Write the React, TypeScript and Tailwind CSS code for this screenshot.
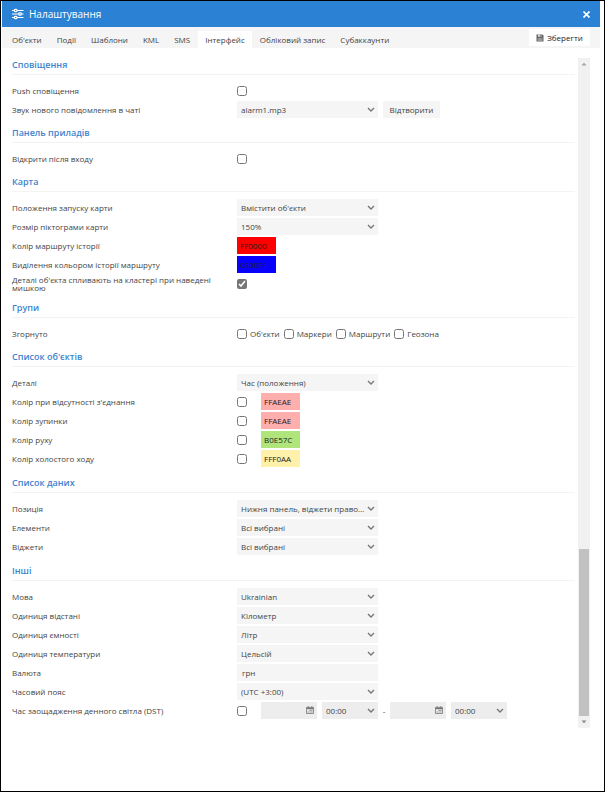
import React, { useId } from 'react';
import { clsx } from 'clsx';

const tabs = ["Об'єкти", 'Події', 'Шаблони', 'KML', 'SMS', 'Інтерфейс', 'Обліковий запис', 'Субаккаунти'];

function SlidersIcon() {
  return (
    <svg width="12" height="12" viewBox="0 0 12 12" fill="none" stroke="white" strokeWidth="1.2">
      <path d="M0 2.5h2.5M5.1 2.5H11.5M0 6h6.5M9.5 6h2M0 9.5h2.5M5.1 9.5h6.4" />
      <rect x="2.5" y="1.3" width="2.4" height="2.4" rx="0.8" />
      <rect x="6.8" y="4.8" width="2.4" height="2.4" rx="0.8" />
      <rect x="2.5" y="8.3" width="2.4" height="2.4" rx="0.8" />
    </svg>
  );
}

function SaveIcon() {
  return (
    <svg width="8" height="8" viewBox="0 0 8 8">
      <path d="M0.5 0.5h6L7.5 1.5v6h-7z" fill="#666" />
      <path d="M2 0.5h3.4v2.2H2z" fill="#ddd" />
      <path d="M4.2 0.8h0.8v1.5h-0.8z" fill="#555" />
      <path d="M1.6 4h4.8v3H1.6z" fill="#999" />
    </svg>
  );
}

function CalendarIcon() {
  return (
    <svg width="8" height="8" viewBox="0 0 8 8" fill="none" stroke="#777" strokeWidth="0.8">
      <path d="M0.5 1.4h7v6.1h-7z" />
      <path d="M0.5 2.4h7" strokeWidth="1.6" />
      <path d="M2.2 0v1.6M5.8 0v1.6" />
      <path d="M3.6 4.4h1M5.4 4.4h1M1.6 6h1M3.6 6h1M5.4 6h1" strokeWidth="1.2" />
    </svg>
  );
}

function Select({ id, value, className, label }: { id?: string; value: string; className?: string; label?: string }) {
  return (
    <span className={clsx('relative block h-[17px]', className || 'w-[141px] bg-[#f5f5f5]')}>
      <select
        id={id}
        aria-label={label}
        className="block h-full w-full appearance-none truncate bg-transparent pl-1 pr-3 text-[8px] outline-none"
      >
        <option>{value}</option>
      </select>
      <svg
        className="pointer-events-none absolute right-[3px] top-[6px]"
        width="8"
        height="6"
        viewBox="0 0 8 6"
        fill="none"
        stroke="#777"
        strokeWidth="1.4"
      >
        <path d="M1 1l3 3 3-3" />
      </svg>
    </span>
  );
}

function Check({ id, checked, label }: { id?: string; checked?: boolean; label?: string }) {
  return (
    <input
      id={id}
      type="checkbox"
      aria-label={label}
      defaultChecked={checked}
      className="block h-[10px] w-[10px] shrink-0 accent-[#767676]"
    />
  );
}

function ColorInput({ id, value, label }: { id?: string; value: string; label?: string }) {
  return (
    <input
      id={id}
      aria-label={label}
      defaultValue={value}
      className="block h-[17px] w-[39px] pl-[3px] text-[8px] text-[#222] outline-none"
      style={{ backgroundColor: '#' + value }}
    />
  );
}

function DateInput({ label }: { label: string }) {
  return (
    <span className="relative block">
      <input aria-label={label} className="block h-[17px] w-14 bg-[#ededed] pl-1 text-[8px] outline-none" />
      <span className="pointer-events-none absolute right-[3px] top-1">
        <CalendarIcon />
      </span>
    </span>
  );
}

function Section({ title, children }: { title: string; children: React.ReactNode }) {
  // longer lists get slightly more room below
  const long = React.Children.count(children) > 2;
  return (
    <section className={long ? 'pb-1.5' : 'pb-[5px]'}>
      <h2 className="mb-1.5 h-[19px] border-b border-[#f3f3f3] text-[9px] leading-[18px] font-semibold text-[#3d83cf]">
        {title}
      </h2>
      {children}
    </section>
  );
}

function Row({ label, children }: { label: string; children: (id: string) => React.ReactNode }) {
  const id = useId();
  return (
    <div className="flex h-[19px] items-center">
      <label htmlFor={id} className="w-[225px] shrink-0 pr-4 leading-[8px]">
        {label}
      </label>
      {children(id)}
    </div>
  );
}

function SelectRow({ label, value }: { label: string; value: string }) {
  return <Row label={label}>{(id) => <Select id={id} value={value} />}</Row>;
}

function ColorRow({ label, value }: { label: string; value: string }) {
  return (
    <Row label={label}>
      {(id) => (
        <div className="flex items-center gap-[14px]">
          <Check id={id} />
          <ColorInput value={value} label={label} />
        </div>
      )}
    </Row>
  );
}

export default function App() {
  return (
    <div className="flex min-h-screen flex-col border border-black bg-white pl-px pr-1 font-['Open_Sans',sans-serif] text-[8px] text-[#444]">
      {/* Title bar */}
      <header className="flex h-[26px] items-center bg-[#2b82d4] pl-[10px] pr-[10px] text-white">
        <SlidersIcon />
        <h1 className="ml-[5px] flex-1 text-[10px]">Налаштування</h1>
        <button aria-label="Закрити">
          <svg width="7" height="7" viewBox="0 0 7 7" stroke="white" strokeWidth="1.6">
            <path d="M0.5 0.5l6 6M6.5 0.5l-6 6" />
          </svg>
        </button>
      </header>

      {/* Tabs */}
      <nav className="flex h-[21px] bg-[#f5f5f5] pl-[3px] pr-[10px]">
        <div className="flex flex-1 items-end gap-px">
          {tabs.map((tab) => (
            <button
              key={tab}
              className={clsx('h-[17px] px-[7px] leading-[15px] whitespace-nowrap', tab === 'Інтерфейс' && 'bg-white')}
            >
              {tab}
            </button>
          ))}
        </div>
        <button className="mt-[2px] flex h-[17px] w-[61px] items-center justify-center gap-[3px] bg-white text-[#222]">
          <SaveIcon />
          Зберегти
        </button>
      </nav>

      {/* Settings */}
      <main className="flex pl-[10px] pr-[10px] pt-2">
        <div className="min-w-0 flex-1 pb-[2px]">
          <Section title="Сповіщення">
            <Row label="Push сповіщення">{(id) => <Check id={id} />}</Row>
            <Row label="Звук нового повідомлення в чаті">
              {(id) => (
                <>
                  <Select id={id} value="alarm1.mp3" />
                  <button className="ml-[5px] h-[17px] w-[57px] bg-[#f5f5f5]">Відтворити</button>
                </>
              )}
            </Row>
          </Section>

          <Section title="Панель приладів">
            <Row label="Відкрити після входу">{(id) => <Check id={id} />}</Row>
          </Section>

          <Section title="Карта">
            <SelectRow label="Положення запуску карти" value="Вмістити об'єкти" />
            <SelectRow label="Розмір піктограми карти" value="150%" />
            <Row label="Колір маршруту історії">{(id) => <ColorInput id={id} value="FF0000" />}</Row>
            <Row label="Виділення кольором історії маршруту">{(id) => <ColorInput id={id} value="0800FF" />}</Row>
            <Row label="Деталі об'єкта спливають на кластері при наведені мишкою">
              {(id) => <Check id={id} checked />}
            </Row>
          </Section>

          <Section title="Групи">
            <div className="flex h-[19px] items-center" role="group" aria-label="Згорнуто">
              <span className="w-[225px] shrink-0">Згорнуто</span>
              <div className="flex gap-1">
                {["Об'єкти", 'Маркери', 'Маршрути', 'Геозона'].map((name) => (
                  <label key={name} className="flex items-center gap-[3px]">
                    <Check />
                    {name}
                  </label>
                ))}
              </div>
            </div>
          </Section>

          <Section title="Список об'єктів">
            <SelectRow label="Деталі" value="Час (положення)" />
            <ColorRow label="Колір при відсутності з'єднання" value="FFAEAE" />
            <ColorRow label="Колір зупинки" value="FFAEAE" />
            <ColorRow label="Колір руху" value="B0E57C" />
            <ColorRow label="Колір холостого ходу" value="FFF0AA" />
          </Section>

          <Section title="Список даних">
            <SelectRow label="Позиція" value="Нижня панель, віджети праворуч" />
            <SelectRow label="Елементи" value="Всі вибрані" />
            <SelectRow label="Віджети" value="Всі вибрані" />
          </Section>

          <Section title="Інші">
            <SelectRow label="Мова" value="Ukrainian" />
            <SelectRow label="Одиниця відстані" value="Кілометр" />
            <SelectRow label="Одиниця ємності" value="Літр" />
            <SelectRow label="Одиниця температури" value="Цельсій" />
            <Row label="Валюта">
              {(id) => (
                <input id={id} defaultValue="грн" className="h-[17px] w-[141px] bg-[#f5f5f5] pl-[5px] text-[8px] outline-none" />
              )}
            </Row>
            <SelectRow label="Часовий пояс" value="(UTC +3:00)" />
            <Row label="Час заощадження денного світла (DST)">
              {(id) => (
                <div className="flex items-center">
                  <div className="mr-[14px]">
                    <Check id={id} />
                  </div>
                  <div className="flex gap-[5px]">
                    <DateInput label="Початок" />
                    <Select label="Час початку" value="00:00" className="w-14 bg-[#ededed]" />
                  </div>
                  <span className="w-3 text-center">-</span>
                  <div className="flex gap-[5px]">
                    <DateInput label="Кінець" />
                    <Select label="Час кінця" value="00:00" className="w-14 bg-[#ededed]" />
                  </div>
                </div>
              )}
            </Row>
          </Section>
        </div>

        {/* Scrollbar */}
        <div className="ml-[3px] mt-[2px] flex w-3 flex-col items-center bg-[#f1f1f1]">
          <svg className="my-1 shrink-0" width="6" height="4" viewBox="0 0 6 4">
            <path d="M0.5 3.5L3 0.8l2.5 2.7z" fill="#a3a3a3" />
          </svg>
          <div className="mt-auto h-1/4 w-[10px] bg-[#c1c1c1]" />
          <svg className="my-1 shrink-0" width="6" height="4" viewBox="0 0 6 4">
            <path d="M0.5 0.5L3 3.2l2.5-2.7z" fill="#888" />
          </svg>
        </div>
      </main>
    </div>
  );
}
